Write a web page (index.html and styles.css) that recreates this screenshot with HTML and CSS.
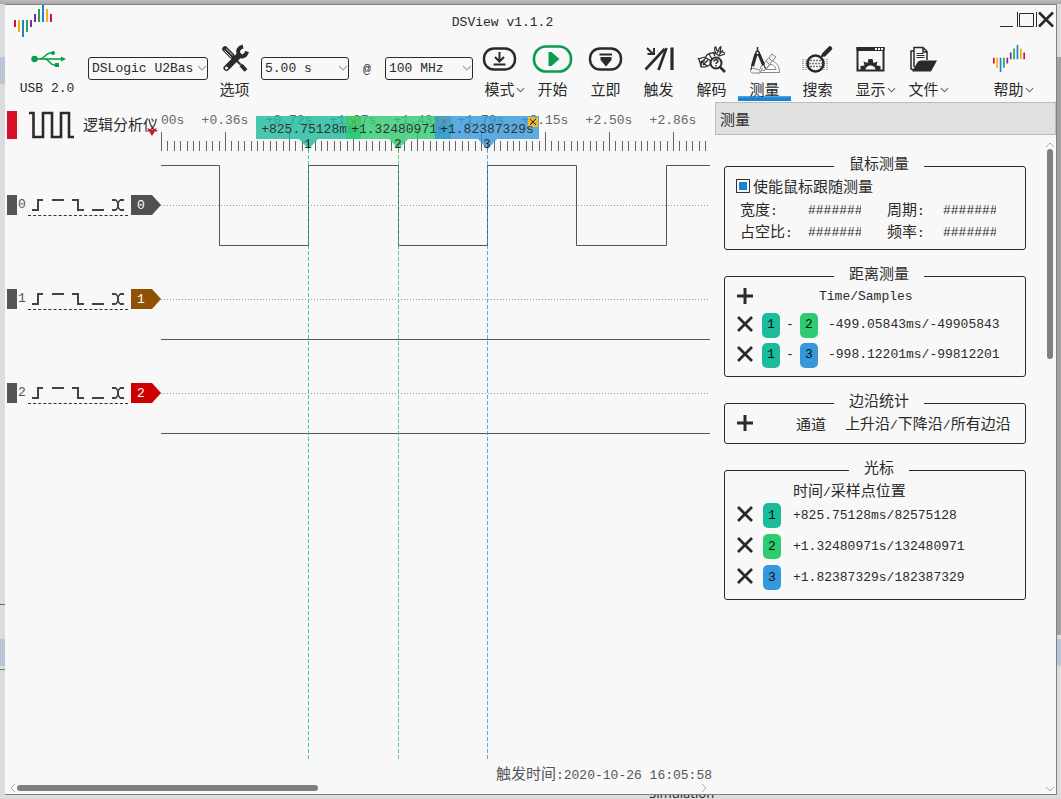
FILE: index.html
```html
<!DOCTYPE html>
<html lang="zh-CN">
<head>
<meta charset="utf-8">
<title>DSView v1.1.2</title>
<link rel="stylesheet" href="styles.css">
</head>
<body>
<svg class="defs" aria-hidden="true">
  <symbol id="bars" viewBox="13 5 40 32">
    <path stroke="#d8102a" d="M15 20v7M51 14v8"/>
    <path stroke="#f0b010" d="M19 20v12M47 9v13"/>
    <path stroke="#1a84d0" d="M23 20v17M43 5v17"/>
    <path stroke="#28a450" d="M27 20v12M39 9v13"/>
    <path stroke="#6a30a0" d="M31 20v7M35 14v8"/>
  </symbol>
  <symbol id="chev" viewBox="0 0 10 6"><path d="M1 1l4 4 4-4" fill="none" stroke="currentColor" stroke-width="1.2"/></symbol>
  <symbol id="cross" viewBox="0 0 16 16"><path d="M1 1l14 14M15 1L1 15" fill="none" stroke="currentColor" stroke-width="2.8"/></symbol>
  <symbol id="plus" viewBox="0 0 16 16"><path d="M8 0v16M0 8h16" fill="none" stroke="currentColor" stroke-width="3"/></symbol>
  <symbol id="rise" viewBox="0 0 20 20"><path d="M4 15h6V5h5" /></symbol>
  <symbol id="high" viewBox="0 0 20 20"><path d="M4 5h12"/></symbol>
  <symbol id="fall" viewBox="0 0 20 20"><path d="M4 5h6v10h6"/></symbol>
  <symbol id="low" viewBox="0 0 20 20"><path d="M4 15h12"/></symbol>
  <symbol id="edge" viewBox="0 0 20 20"><path d="M4 5h4M12 5h4M4 15h4M12 15h4M10 8v4"/><path stroke-width="1.5" d="M8 5l2 3 2-3M8 15l2-3 2 3"/></symbol>
</svg>
<span class="behind" aria-hidden="true">Simulation</span>
<div class="window">
  <header class="titlebar">
    <svg class="logo" width="40" height="32"><use href="#bars"/></svg>
    <h1>DSView v1.1.2</h1>
    <div class="winbtns">
      <button type="button" aria-label="最小化"><svg width="18" height="18"><path d="M0 15.500h13M17.500 1v15"/></svg></button>
      <button type="button" aria-label="最大化"><svg width="18" height="18"><path d="M1.500 2.500h14v13h-14z"/></svg></button>
      <button type="button" aria-label="关闭"><svg width="20" height="18"><path d="M.5 1v15"/><path stroke-width="2.500" d="M3 1.500l14 14M17 1.500l-14 14"/></svg></button>
    </div>
  </header>

  <nav class="toolbar">
    <div class="tool usb">
      <svg width="44" height="32" fill="none" stroke="#0a9e4c" stroke-width="1.600"><circle cx="9.500" cy="16" r="3.200" fill="#0a9e4c" stroke="none"/><path d="M10 16h27"/><path fill="#0a9e4c" stroke="none" d="M36 13.500l5 2.500-5 2.500z"/><path d="M15 16c4 0 6-6 10-6h4M20 16c4 0 5 6 9 6h4"/><circle cx="28" cy="10" r="2" fill="#0a9e4c" stroke="none"/><path d="M30 20h4v4h-4z" fill="#0a9e4c" stroke="none"/></svg>
      <span>USB 2.0</span>
    </div>
    <div class="combo device"><select aria-label="设备"><option>DSLogic U2Bas</option></select><svg width="10" height="6"><use href="#chev"/></svg></div>
    <button type="button" class="tool">
      <svg width="44" height="32" fill="none" stroke="#2a2a2a"><path stroke-width="5.500" stroke-linecap="round" d="M12 6l7 7"/><path stroke="#ddd" stroke-width="1" d="M11.500 7.500l7 7M13 5.500l7 7"/><path stroke-width="2" d="M19 13l9 9"/><path stroke-width="4" d="M28 22l5 5.500"/><path stroke-width="6" stroke-linecap="round" d="M13.500 25L26 12.500"/><path stroke-width="4" d="M30 3.500c-4 1-6 4-4.500 8 2 3 7 3 8.500-3"/><circle cx="13.500" cy="25" r="1.500" fill="#fff" stroke="none"/></svg>
      <span class="zh">选项</span>
    </button>
    <div class="combo rate"><select aria-label="采样时长"><option>5.00 s</option></select><svg width="10" height="6"><use href="#chev"/></svg></div>
    <span class="at">@</span>
    <div class="combo rate"><select aria-label="采样率"><option>100 MHz</option></select><svg width="10" height="6"><use href="#chev"/></svg></div>
    <button type="button" class="tool">
      <svg width="44" height="32" fill="none" stroke="#2a2a2a" stroke-width="2.400"><rect x="6" y="5.500" width="31" height="21" rx="10"/><path stroke-width="2" d="M21.500 9v9M17 14l4.500 4.500L26 14M15.500 21.500h12"/></svg>
      <span class="zh">模式<svg class="chev" width="9" height="6"><use href="#chev"/></svg></span>
    </button>
    <button type="button" class="tool">
      <svg width="44" height="32" fill="none" stroke="#0a9e4c" stroke-width="2.600"><rect x="3" y="3.500" width="37" height="25" rx="12"/><path fill="#0a9e4c" stroke="none" d="M17.500 9h3l8 7-8 7h-3z"/></svg>
      <span class="zh">开始</span>
    </button>
    <button type="button" class="tool">
      <svg width="44" height="32" fill="none" stroke="#2a2a2a" stroke-width="2.400"><rect x="6" y="5.500" width="31" height="21" rx="10"/><path stroke-width="2" d="M15.500 11.500H28"/><path fill="#2a2a2a" stroke="none" d="M16.500 14h11v3L22 23.500 16.500 17z"/></svg>
      <span class="zh">立即</span>
    </button>
    <button type="button" class="tool">
      <svg width="44" height="32" fill="none" stroke="#2a2a2a" stroke-width="2.600"><path d="M8.500 26.500L27.500 6M21.500 27l8-22"/><path stroke-width="3.200" d="M35 4.500V27"/><path stroke-width="2" d="M10 5l6 6M10.500 11H17V5"/></svg>
      <span class="zh">触发</span>
    </button>
    <button type="button" class="tool">
      <svg width="44" height="32" fill="none" stroke="#2a2a2a" stroke-width="1.200"><path d="M8 16l7-2M9 19l6-1M11 24c0-4 1-6 4-8M8 15c2 2 2 5 3 9 4 0 8 0 10-4M15 16c1-5 6-8 12-5M25 4c-1 4 0 6 4 9l6-2M25 4c1-1 1 1 2 4M27 10l3-6M29 12l4-5M13 22l5-5M11 18l6 5M16 15l5 3M19 11l3 5M23 9l2 4M31 3l-1 8M35 10c-3-2-5-2-8-2"/><circle cx="26" cy="20" r="5.500" fill="#f8f8f8" stroke-width="2"/><path stroke-width="2.500" d="M30 24l5 5"/><path stroke-width="1.500" d="M24 18.500c0-2.500 4-2.500 4 0 0 1-2 1-2 2.500M26 22v1.500"/></svg>
      <span class="zh">解码</span>
    </button>
    <button type="button" class="tool active" aria-pressed="true">
      <svg width="44" height="32" fill="none" stroke="#2a2a2a"><g stroke="#888" stroke-width="1"><path fill="#fff" d="M17 29.500h19.500c0-7-4-11-9-12.500zM23 26.500h10c-1-4-3-5-6-5z"/><path fill="#eee" d="M17 25L29 11l4 3-12 14zM20 22l3 3M23 18l3 3M26 15l3 3"/><path d="M9 25l8 2v3H9c-2-1-2-4 0-5z"/></g><path stroke-width="1.500" d="M14.500 4v5"/><circle cx="14.500" cy="10" r="2.500" fill="#2a2a2a" stroke="none"/><circle cx="14.500" cy="10" r="1" fill="#fff" stroke="none"/><path stroke-width="3.200" d="M13 11L9.500 23"/><path stroke-width="3.200" d="M16 11l4.500 11"/><path stroke-width="1" d="M9 22l-1 5M20.500 21l2 5"/></svg>
      <span class="zh">测量</span>
    </button>
    <button type="button" class="tool">
      <svg width="44" height="32" fill="none" stroke="#2a2a2a"><path stroke="#aaa" stroke-width="1" stroke-dasharray="2 1" d="M6 16.500h27M6 18.500h27M6 20.500h27M6 22.500h27M6 24.500h27M6 26.500h27"/><circle cx="19.500" cy="20.500" r="8" fill="#f8f8f8" stroke-width="2.600"/><path stroke="#777" stroke-width="1.500" stroke-dasharray="2 1" d="M14 17.500h11M13 20.500h13M14 23.500h11"/><path stroke-width="2" d="M25 14l3-3"/><path stroke-width="4.500" stroke-linecap="round" d="M28 11.500l6-6"/></svg>
      <span class="zh">搜索</span>
    </button>
    <button type="button" class="tool">
      <svg width="44" height="32" fill="none" stroke="#2a2a2a"><rect x="8.500" y="5" width="26" height="22.500" stroke-width="2"/><path fill="#2a2a2a" stroke="none" d="M7.500 4h28v4h-28z"/><path stroke="#fff" stroke-width="2" stroke-dasharray="2 1" d="M26 6h8"/><path fill="#2a2a2a" stroke="none" d="M11.500 27v-4l4-.5-1-4 4 1.500 1-4h4l1 4 4-1.500-1 4 4 .5v4h-5c0-6-10-6-10 0z"/></svg>
      <span class="zh">显示<svg class="chev" width="9" height="6"><use href="#chev"/></svg></span>
    </button>
    <button type="button" class="tool">
      <svg width="44" height="32" fill="none" stroke="#2a2a2a" stroke-width="1.500"><path d="M12 27l-3-1V8h3M12 24V4.500h9l4 4V17M21 5v4h4"/><path stroke-width="1" d="M14.500 10.500h7M14.500 12.500h8M14.500 14.500h8"/><path fill="#2a2a2a" stroke="none" d="M10 28.500l6-10 3-1h16l-6 11z"/></svg>
      <span class="zh">文件<svg class="chev" width="9" height="6"><use href="#chev"/></svg></span>
    </button>
    <button type="button" class="tool help">
      <svg width="44" height="32"><use href="#bars" x="5" y="2" width="34" height="27"/></svg>
      <span class="zh">帮助<svg class="chev" width="9" height="6"><use href="#chev"/></svg></span>
    </button>
  </nav>

  <main class="main">
    <section class="view">
      <div class="stage">
        <div class="channels">
          <div class="devhead">
            <i class="block red"></i>
            <svg width="46" height="28" fill="none" stroke="#2a2a2a" stroke-width="2.600"><path d="M0 2h4.500v24H14V2h9v24h9V2h8v24h5"/></svg>
            <span class="zh">逻辑分析仪</span>
            <svg class="mark" width="10" height="8"><path fill="#d8102a" d="M0 0l5 2 5-2-5 8z"/></svg>
          </div>
          <div class="channel">
            <i class="block"></i><span class="num">0</span>
            <div class="trig"><button type="button" aria-label="上升沿"><svg><use href="#rise"/></svg></button><button type="button" aria-label="高电平"><svg><use href="#high"/></svg></button><button type="button" aria-label="下降沿"><svg><use href="#fall"/></svg></button><button type="button" aria-label="低电平"><svg><use href="#low"/></svg></button><button type="button" aria-label="双沿"><svg><use href="#edge"/></svg></button></div>
            <b class="tag">0</b>
          </div>
          <div class="channel">
            <i class="block"></i><span class="num">1</span>
            <div class="trig"><button type="button" aria-label="上升沿"><svg><use href="#rise"/></svg></button><button type="button" aria-label="高电平"><svg><use href="#high"/></svg></button><button type="button" aria-label="下降沿"><svg><use href="#fall"/></svg></button><button type="button" aria-label="低电平"><svg><use href="#low"/></svg></button><button type="button" aria-label="双沿"><svg><use href="#edge"/></svg></button></div>
            <b class="tag brown">1</b>
          </div>
          <div class="channel">
            <i class="block"></i><span class="num">2</span>
            <div class="trig"><button type="button" aria-label="上升沿"><svg><use href="#rise"/></svg></button><button type="button" aria-label="高电平"><svg><use href="#high"/></svg></button><button type="button" aria-label="下降沿"><svg><use href="#fall"/></svg></button><button type="button" aria-label="低电平"><svg><use href="#low"/></svg></button><button type="button" aria-label="双沿"><svg><use href="#edge"/></svg></button></div>
            <b class="tag crimson">2</b>
          </div>
        </div>
        <svg class="plot" role="img" aria-label="波形">
          <defs>
            <pattern id="ticks" width="64" height="50" patternUnits="userSpaceOnUse">
              <path stroke="#666" d="M.5 31v19M6.500 40v10M13.500 40v10M19.500 40v10M26.500 40v10M32.500 40v10M38.500 40v10M45.500 40v10M51.500 40v10M58.500 40v10"/>
            </pattern>
          </defs>
          <rect width="548" height="50" fill="url(#ticks)"/>
          <g class="scale">
            <text x="0" y="23">+0.00s</text><text x="64" y="23">+0.36s</text><text x="128" y="23">+0.72s</text><text x="192" y="23">+1.07s</text><text x="256" y="23">+1.43s</text><text x="320" y="23">+1.79s</text><text x="384" y="23">+2.15s</text><text x="448" y="23">+2.50s</text><text x="512" y="23">+2.86s</text>
          </g>
          <path class="zero" d="M0 104.500h549M0 198.500h549M0 292.500h549"/>
          <path class="wave" d="M0 64.500h58.500v80h89v-80h90v80h89v-80h89v80h90v-80h43.500M0 238.500h549M0 332.500h549"/>
          <g class="cursor" fill="#1abc9c">
            <path stroke="#1abc9c" stroke-dasharray="4 2" d="M147.500 48v612"/>
            <path d="M95 15h105v23H157l-9.500 10L138 38H95z"/>
            <rect x="188" y="16" width="10" height="10" fill="#f0a800"/><path stroke="#000" d="M190 18l6 6M196 18l-6 6"/>
            <text x="147" y="32">+825.75128ms</text><text x="147" y="47">1</text>
          </g>
          <g class="cursor" fill="#2ecc71">
            <path stroke="#2ecc71" stroke-dasharray="4 2" d="M237.500 48v612"/>
            <path d="M185 15h105v23h-43l-9.500 10-9.500-10H185z"/>
            <rect x="278" y="16" width="10" height="10" fill="#f0a800"/><path stroke="#000" d="M280 18l6 6M286 18l-6 6"/>
            <text x="237" y="32">+1.32480971s</text><text x="237" y="47">2</text>
          </g>
          <g class="cursor" fill="#3498db">
            <path stroke="#3498db" stroke-dasharray="4 2" d="M326.500 48v612"/>
            <path d="M274 15h104v23h-42l-9.500 10-9.500-10h-43z"/>
            <rect x="367" y="16" width="10" height="10" fill="#f0a800"/><path stroke="#000" d="M369 18l6 6M375 18l-6 6"/>
            <text x="326" y="32">+1.82387329s</text><text x="326" y="47">3</text>
          </g>
        </svg>
      </div>
      <p class="trigtime"><span class="zh">触发时间</span>:2020-10-26 16:05:58</p>
      <div class="hscroll"><svg width="6" height="10"><path d="M5 1L1 5l4 4"/></svg><div class="track"><i></i></div><svg width="6" height="10"><path d="M1 1l4 4-4 4"/></svg></div>
    </section>

    <aside class="dock">
      <h2 class="zh">测量</h2>
      <div class="dockbody">
        <form class="groups">
          <fieldset>
            <legend class="zh">鼠标测量</legend>
            <label class="check zh"><input type="checkbox" checked><span>使能鼠标跟随测量</span></label>
            <dl class="mouse">
              <dt><span class="zh">宽度</span>:</dt><dd>#######</dd>
              <dt><span class="zh">周期</span>:</dt><dd>#######</dd>
              <dt><span class="zh">占空比</span>:</dt><dd>#######</dd>
              <dt><span class="zh">频率</span>:</dt><dd>#######</dd>
            </dl>
          </fieldset>
          <fieldset>
            <legend class="zh">距离测量</legend>
            <div class="head"><button type="button" class="mini" aria-label="添加"><svg width="16" height="16"><use href="#plus"/></svg></button><span class="wide">Time/Samples</span></div>
            <div class="row"><button type="button" class="mini" aria-label="删除"><svg width="16" height="16"><use href="#cross"/></svg></button><button type="button" class="badge">1</button><span class="dash">-</span><button type="button" class="badge green">2</button><span class="val">-499.05843ms/-49905843</span></div>
            <div class="row"><button type="button" class="mini" aria-label="删除"><svg width="16" height="16"><use href="#cross"/></svg></button><button type="button" class="badge">1</button><span class="dash">-</span><button type="button" class="badge blue">3</button><span class="val">-998.12201ms/-99812201</span></div>
          </fieldset>
          <fieldset>
            <legend class="zh">边沿统计</legend>
            <div class="head"><button type="button" class="mini" aria-label="添加"><svg width="16" height="16"><use href="#plus"/></svg></button><span class="chan zh">通道</span><span class="kinds"><span class="zh">上升沿</span>/<span class="zh">下降沿</span>/<span class="zh">所有边沿</span></span></div>
          </fieldset>
          <fieldset class="cursors">
            <legend class="zh">光标</legend>
            <div class="head"><span class="where"><span class="zh">时间</span>/<span class="zh">采样点位置</span></span></div>
            <div class="row"><button type="button" class="mini" aria-label="删除"><svg width="16" height="16"><use href="#cross"/></svg></button><button type="button" class="badge">1</button><span class="val">+825.75128ms/82575128</span></div>
            <div class="row"><button type="button" class="mini" aria-label="删除"><svg width="16" height="16"><use href="#cross"/></svg></button><button type="button" class="badge green">2</button><span class="val">+1.32480971s/132480971</span></div>
            <div class="row"><button type="button" class="mini" aria-label="删除"><svg width="16" height="16"><use href="#cross"/></svg></button><button type="button" class="badge blue">3</button><span class="val">+1.82387329s/182387329</span></div>
          </fieldset>
        </form>
        <div class="vscroll"><svg width="10" height="6"><path d="M1 5l4-4 4 4"/></svg><div class="track"><i></i></div><svg width="10" height="6"><path d="M1 1l4 4 4-4"/></svg></div>
      </div>
    </aside>
  </main>
</div>
</body>
</html>
```
FILE: styles.css
```css
* { box-sizing: border-box; }

body {
  margin: 0;
  min-height: 100vh;
  padding: 4px 4px 4px 5px;
  display: flex;
  position: relative;
  overflow: hidden;
  font: 13px/18px "Liberation Mono", "Noto Sans CJK SC", monospace;
  color: #2a2a2a;
  background:
    linear-gradient(#b9c6d6, #b9c6d6) 0 57px / 5px 27px no-repeat,
    linear-gradient(#b9c6d6, #b9c6d6) 0 639px / 5px 27px no-repeat,
    linear-gradient(#666, #666) 0 604px / 5px 1px no-repeat,
    linear-gradient(#777, #777) 0 669px / 5px 1px no-repeat,
    linear-gradient(#a2a2a2, #a2a2a2) 100% 57px / 4px 578px no-repeat,
    linear-gradient(#b9c6d6, #b9c6d6) 100% 639px / 4px 27px no-repeat,
    linear-gradient(#bcbcbc, #a8a8a8) 0 0 / 100% 4px no-repeat,
    #dcdcdc;
}

.defs { position: absolute; width: 0; height: 0; }
svg { display: block; flex: none; }
button { border: 0; padding: 0; background: none; font: inherit; color: inherit; }
.zh { font-family: "Noto Sans CJK SC", sans-serif; font-size: 15px; }
.behind { position: absolute; left: 649px; bottom: -3px; font: 13px/18px "Noto Sans", sans-serif; }

.window {
  position: relative;
  flex: 1;
  min-width: 0;
  display: flex;
  flex-direction: column;
  border: 1px solid #808080;
  border-left: 0;
  background: #f8f8f8;
}

/* title bar */
.titlebar { display: grid; grid-template-columns: 1fr auto; height: 33px; }
.logo { grid-area: 1 / 1; margin-left: 8px; }
.logo, .help svg { stroke-width: 2px; }
.titlebar h1 { grid-area: 1 / 1; margin: 9px 0 0; font-size: 13px; line-height: 18px; font-weight: 400; text-align: center; }
.winbtns { display: flex; align-items: flex-start; margin-top: 6px; }
.winbtns svg { fill: none; stroke: #2a2a2a; stroke-width: 1px; }

/* tool bar */
.toolbar { display: flex; height: 63px; }
.tool { flex: none; width: 53px; padding-top: 5px; display: flex; flex-direction: column; align-items: center; justify-content: space-between; white-space: nowrap; }
.tool > span { position: relative; height: 23px; line-height: 22px; }
.usb { width: 58px; margin: 0 12px 0 13px; }
.chev { position: absolute; left: 100%; top: 9px; margin-left: 1px; color: #666; }
.combo { position: relative; margin-top: 19px; height: 23px; }
.combo select { appearance: none; width: 100%; height: 100%; padding: 1px 0 0 3px; border: 1px solid #2a2a2a; border-radius: 3px; background: transparent; font: inherit; color: inherit; }
.combo svg { position: absolute; right: 1px; top: 8px; color: #aaa; }
.device { width: 120px; }
.rate { width: 88px; }
.at { width: 36px; padding-top: 23px; text-align: center; }
.active { background: linear-gradient(#5aaee8, #1a84d4 2px) 0 100% / 100% 5px no-repeat; }
.help { margin: 0 21px 0 auto; }

/* waveform view */
.main { flex: 1; display: flex; min-height: 0; }
.view { flex: 1; min-width: 0; display: flex; flex-direction: column; }
.stage { flex: 1; display: flex; min-height: 0; }
.channels { flex: none; width: 156px; padding-left: 2px; }
.devhead { position: relative; display: flex; height: 57px; padding-top: 10px; }
.devhead span { margin-left: 8px; line-height: 26px; }
.devhead svg { margin-left: 12px; }
.devhead .mark { position: absolute; right: 4px; top: 27px; margin: 0; }
.block { width: 10px; height: 20px; background: #555; }
.red { height: 28px; background: #d8102a; }
.channel { display: flex; align-items: center; height: 94px; color: #555; }
.num { width: 11px; padding-left: 1px; }
.trig { display: flex; width: 100px; height: 21px; border-bottom: 1px dashed #333; }
.trig svg { width: 20px; height: 20px; fill: none; stroke: #444; stroke-width: 2px; }
.tag { width: 30px; height: 20px; margin-left: 3px; padding-left: 6px; line-height: 21px; font-weight: 400; color: #fff; background: #505050; clip-path: polygon(0 0, 70% 0, 100% 50%, 70% 100%, 0 100%); }
.brown { background: #8f5202; }
.crimson { background: #cc0000; }
.plot { flex: 1; min-width: 0; height: 100%; overflow: hidden; }
.plot text { font: 13px "Liberation Mono", monospace; text-anchor: middle; }
.scale { fill: #666; }
.zero { stroke: #999; stroke-dasharray: 1 2; }
.wave { fill: none; stroke: #555; }
.cursor { opacity: .8; }
.cursor text { fill: #000; }
.trigtime { margin: 0; height: 18px; padding-right: 3px; text-align: right; color: #555; line-height: 18px; }

/* scroll bars */
.hscroll { display: flex; align-items: center; gap: 1px; height: 12px; padding: 0 8px 0 5px; }
.hscroll svg, .vscroll svg { fill: none; stroke: #aaa; }
.track { flex: 1; }
.track i { display: block; background: #808080; border-radius: 3px; }
.hscroll .track i { width: 44%; height: 6px; }
.vscroll { display: flex; flex-direction: column; align-items: center; width: 12px; padding: 7px 0 2px; gap: 1px; }
.vscroll .track i { width: 6px; height: 33%; }

/* measurement dock */
.dock { flex: none; width: 341px; padding-top: 1px; display: flex; flex-direction: column; }
.dock h2 { margin: 0; height: 33px; padding-left: 4px; border: 1px solid #bbb; background: #e0e0e0; font-weight: 400; line-height: 31px; }
.dockbody { flex: 1; display: flex; }
.groups { flex: 1; padding: 19px 18px 0 9px; }
fieldset { margin: 0 0 14px; min-width: 0; border: 1px solid #2a2a2a; border-radius: 3px; padding: 0 0 6px 8px; }
legend { margin: 0 auto; padding: 0 15px 6px; line-height: 18px; }
.check { display: flex; align-items: center; gap: 3px; height: 16px; padding-left: 3px; line-height: 14px; }
.check input { appearance: none; margin: 0; width: 14px; height: 14px; border: 1px solid #333; padding: 2px; background: #1a84d4 content-box; }
.mouse { display: grid; grid-template-columns: 68px 79px 56px 53px; grid-auto-rows: 22px; margin: 5px 0 0 7px; line-height: 20px; }
.mouse dd { margin: 0; width: 53px; overflow: hidden; line-height: 24px; }
.head, .row { display: flex; align-items: center; padding-left: 4px; white-space: nowrap; }
.head { height: 18px; margin-bottom: 4px; }
.row { height: 30px; }
.mini { flex: none; width: 16px; height: 16px; margin-bottom: 3px; }
.wide { margin-left: 66px; }
.badge { flex: none; width: 18px; height: 25px; margin-left: 9px; border-radius: 5px; background: #1abc9c; color: #111; text-align: center; }
.green { background: #2ecc71; }
.blue { background: #3498db; }
.dash { width: 20px; text-align: center; }
.dash + .badge { margin-left: 0; }
.val { margin-left: 10px; }
.chan { margin-left: 43px; }
.kinds { margin-left: 19px; }
.cursors .head { margin: 0; }
.cursors .row { height: 31px; }
.cursors .badge { margin-left: 10px; }
.cursors .val { margin-left: 12px; }
.where { margin-left: 56px; }
```
